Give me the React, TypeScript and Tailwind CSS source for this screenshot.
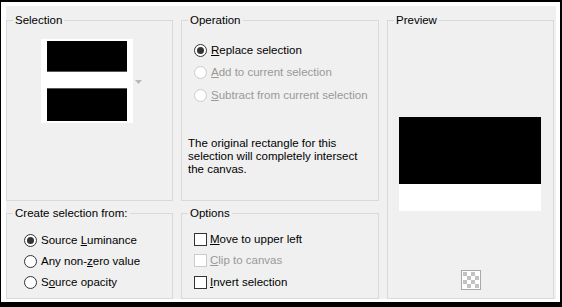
import React from 'react';

const font = { fontFamily: '"Liberation Sans", Arial, sans-serif' };

interface OptionProps {
  label: React.ReactNode;
  checked?: boolean;
  disabled?: boolean;
}

const Radio = ({ label, checked, disabled }: OptionProps) => (
  <div className="flex items-center h-full">
    <span
      className={
        disabled
          ? 'w-[13px] h-[13px] rounded-full border border-[#cccccc] bg-white shrink-0'
          : 'w-[13px] h-[13px] rounded-full border border-[#333333] bg-white shrink-0 flex items-center justify-center'
      }
    >
      {checked && <span className="w-[7px] h-[7px] rounded-full bg-[#333333]" />}
    </span>
    <span className={disabled ? 'ml-[4px] text-[#999999]' : 'ml-[4px] text-black'}>{label}</span>
  </div>
);

const Check = ({ label, disabled }: OptionProps) => (
  <div className="flex items-center h-full">
    <span
      className={
        disabled
          ? 'w-[13px] h-[13px] border border-[#cccccc] bg-white shrink-0'
          : 'w-[13px] h-[13px] border border-[#333333] bg-white shrink-0'
      }
    />
    <span className={disabled ? 'ml-[3px] text-[#999999]' : 'ml-[3px] text-black'}>{label}</span>
  </div>
);

const Group = ({
  title,
  className,
  children,
}: {
  title: string;
  className?: string;
  children?: React.ReactNode;
}) => (
  <fieldset className={`border border-[#d9d9d9] min-w-0 h-full ${className ?? ''}`}>
    <legend className="ml-[6px] px-[2px] leading-[14px] text-black">{title}</legend>
    {children}
  </fieldset>
);

const Checker = () => (
  <svg width="20" height="20" viewBox="0 0 20 20">
    <rect x="0.5" y="0.5" width="19" height="19" fill="#ffffff" stroke="#a9a9a9" />
    {[0, 1, 2, 3].map((r) =>
      [0, 1, 2, 3].map((c) =>
        (r + c) % 2 === 0 ? (
          <rect key={`${r}-${c}`} x={2 + c * 4} y={2 + r * 4} width="4" height="4" fill="#c2c2c2" />
        ) : null,
      ),
    )}
  </svg>
);

export default function App() {
  return (
    <div
      className="w-[562px] h-[307px] bg-white border-black border-t-2 border-l border-r-2 border-b-[5px] pt-[4px] pl-[5px] pr-[4px] pb-[3px] text-[11.5px]"
      style={font}
    >
      <div className="h-full bg-[#f0f0f0] pt-[7px]">
        <div className="grid grid-cols-[167px_198px_167px] grid-rows-[188px_93px] gap-x-[8px] gap-y-[5px]">
          <Group title="Selection">
            <div className="flex items-center pl-[34px] pt-[12px]">
              <div className="bg-white w-[92px] h-[84px] px-[6px] pt-[2px] flex flex-col">
                <div className="h-[31px] bg-black border-b border-[#555555]" />
                <div className="h-[16px]" />
                <div className="h-[33px] bg-black border-t border-[#555555]" />
              </div>
              <svg width="7" height="4" viewBox="0 0 7 4" className="ml-[2px] mt-[2px]">
                <path d="M0 0h7L3.5 4z" fill="#b8b8b8" />
              </svg>
            </div>
          </Group>

          <Group title="Operation">
            <div className="pl-[12px] pt-[12px]">
              <div className="h-[22.5px]">
                <Radio checked label={<><u>R</u>eplace selection</>} />
              </div>
              <div className="h-[22.5px]">
                <Radio disabled label={<><u>A</u>dd to current selection</>} />
              </div>
              <div className="h-[22.5px]">
                <Radio disabled label={<><u>S</u>ubtract from current selection</>} />
              </div>
            </div>
            <p className="pl-[6px] mt-[30px] leading-[13px] text-black">
              The original rectangle for this
              <br />
              selection will completely intersect
              <br />
              the canvas.
            </p>
          </Group>

          <Group title="Preview" className="row-span-2 flex flex-col">
            <div className="flex flex-col items-center h-full">
              <div className="mt-[90px] w-[142px] -translate-x-[1px]">
                <div className="h-[67px] bg-black" />
                <div className="h-[27px] bg-white" />
              </div>
              <div className="mt-[59px]">
                <Checker />
              </div>
            </div>
          </Group>

          <Group title="Create selection from:">
            <div className="pl-[17px] pt-[10px]">
              <div className="h-[21px]">
                <Radio checked label={<>Source <u>L</u>uminance</>} />
              </div>
              <div className="h-[21px]">
                <Radio label={<>Any non-<u>z</u>ero value</>} />
              </div>
              <div className="h-[21px]">
                <Radio label={<>S<u>o</u>urce opacity</>} />
              </div>
            </div>
          </Group>

          <Group title="Options">
            <div className="pl-[12px] pt-[8.5px]">
              <div className="h-[21.5px]">
                <Check label={<><u>M</u>ove to upper left</>} />
              </div>
              <div className="h-[21.5px]">
                <Check disabled label={<><u>C</u>lip to canvas</>} />
              </div>
              <div className="h-[21.5px]">
                <Check label={<><u>I</u>nvert selection</>} />
              </div>
            </div>
          </Group>
        </div>
      </div>
    </div>
  );
}
